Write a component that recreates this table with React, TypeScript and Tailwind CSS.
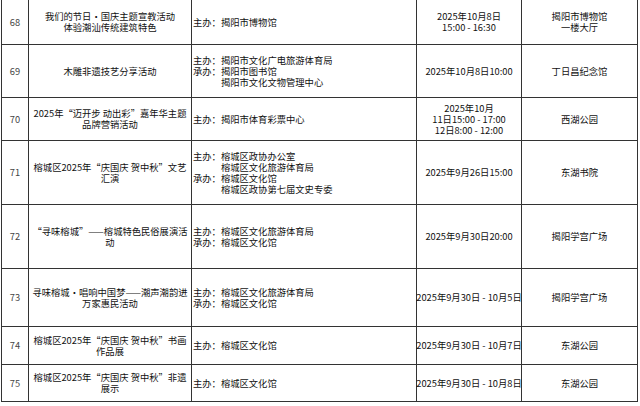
import React from 'react';

type Org = { label: string; names: string[] };

type Row = {
  no: string;
  h: string;
  title: string[];
  orgs: Org[];
  time: string[];
  place: string[];
};

const rows: Row[] = [
  {
    no: '68',
    h: 'h-[45px]',
    title: ['我们的节日·国庆主题宣教活动', '体验潮汕传统建筑特色'],
    orgs: [{ label: '主办：', names: ['揭阳市博物馆'] }],
    time: ['2025年10月8日', '15:00 - 16:30'],
    place: ['揭阳市博物馆', '一楼大厅'],
  },
  {
    no: '69',
    h: 'h-[53px]',
    title: ['木雕非遗技艺分享活动'],
    orgs: [
      { label: '主办：', names: ['揭阳市文化广电旅游体育局'] },
      { label: '承办：', names: ['揭阳市图书馆', '揭阳市文化文物管理中心'] },
    ],
    time: ['2025年10月8日10:00'],
    place: ['丁日昌纪念馆'],
  },
  {
    no: '70',
    h: 'h-[43px]',
    title: ['2025年“迈开步 动出彩”嘉年华主题', '品牌营销活动'],
    orgs: [{ label: '主办：', names: ['揭阳市体育彩票中心'] }],
    time: ['2025年10月', '11日15:00 - 17:00', '12日8:00 - 12:00'],
    place: ['西湖公园'],
  },
  {
    no: '71',
    h: 'h-[64px]',
    title: ['榕城区2025年“庆国庆 贺中秋”文艺', '汇演'],
    orgs: [
      { label: '主办：', names: ['榕城区政协办公室', '榕城区文化旅游体育局'] },
      { label: '承办：', names: ['榕城区文化馆', '榕城区政协第七届文史专委'] },
    ],
    time: ['2025年9月26日15:00'],
    place: ['东湖书院'],
  },
  {
    no: '72',
    h: 'h-[64px]',
    title: ['“寻味榕城”——榕城特色民俗展演活', '动'],
    orgs: [
      { label: '主办：', names: ['榕城区文化旅游体育局'] },
      { label: '承办：', names: ['榕城区文化馆'] },
    ],
    time: ['2025年9月30日20:00'],
    place: ['揭阳学宫广场'],
  },
  {
    no: '73',
    h: 'h-[58px]',
    title: ['寻味榕城·唱响中国梦——潮声潮韵进', '万家惠民活动'],
    orgs: [
      { label: '主办：', names: ['榕城区文化旅游体育局'] },
      { label: '承办：', names: ['榕城区文化馆'] },
    ],
    time: ['2025年9月30日 - 10月5日'],
    place: ['揭阳学宫广场'],
  },
  {
    no: '74',
    h: 'h-[38px]',
    title: ['榕城区2025年“庆国庆 贺中秋”书画', '作品展'],
    orgs: [{ label: '主办：', names: ['榕城区文化馆'] }],
    time: ['2025年9月30日 - 10月7日'],
    place: ['东湖公园'],
  },
  {
    no: '75',
    h: 'h-[37px]',
    title: ['榕城区2025年“庆国庆 贺中秋”非遗', '展示'],
    orgs: [{ label: '主办：', names: ['榕城区文化馆'] }],
    time: ['2025年9月30日 - 10月8日'],
    place: ['东湖公园'],
  },
];

function Lines({ items }: { items: string[] }) {
  return (
    <div className="flex flex-col items-center">
      {items.map((t, i) => (
        <div key={i} className="whitespace-nowrap">{t}</div>
      ))}
    </div>
  );
}

export default function App() {
  return (
    <div
      className="w-[640px] h-[406px] bg-white text-[#111] text-[9.3px] leading-[11px] overflow-hidden"
      style={{ fontFamily: '"Noto Sans CJK SC", "Noto Sans", sans-serif' }}
    >
      <div className="ml-px w-[637px] border-l border-[#333]">
        {rows.map((r) => (
          <div key={r.no} className={`flex ${r.h}`}>
            {/* 序号 */}
            <div className="w-[27px] shrink-0 border-r border-b border-[#333] flex items-center justify-center text-[#444]">
              {r.no}
            </div>
            {/* 活动名称 */}
            <div className="w-[163px] shrink-0 border-r border-b border-[#333] flex items-center justify-center">
              <Lines items={r.title} />
            </div>
            {/* 主办/承办 */}
            <div className="w-[225px] shrink-0 border-r border-b border-[#333] flex flex-col justify-center pl-px">
              {r.orgs.map((o, i) => (
                <div key={i} className="flex">
                  <span className="shrink-0">{o.label}</span>
                  <div className="flex flex-col">
                    {o.names.map((n, j) => (
                      <span key={j} className="whitespace-nowrap">{n}</span>
                    ))}
                  </div>
                </div>
              ))}
            </div>
            {/* 时间 */}
            <div className="w-[105px] shrink-0 border-r border-b border-[#333] flex items-center justify-center">
              <Lines items={r.time} />
            </div>
            {/* 地点 */}
            <div className="w-[116px] shrink-0 border-r border-b border-[#333] flex items-center justify-center">
              <Lines items={r.place} />
            </div>
          </div>
        ))}
      </div>
    </div>
  );
}
